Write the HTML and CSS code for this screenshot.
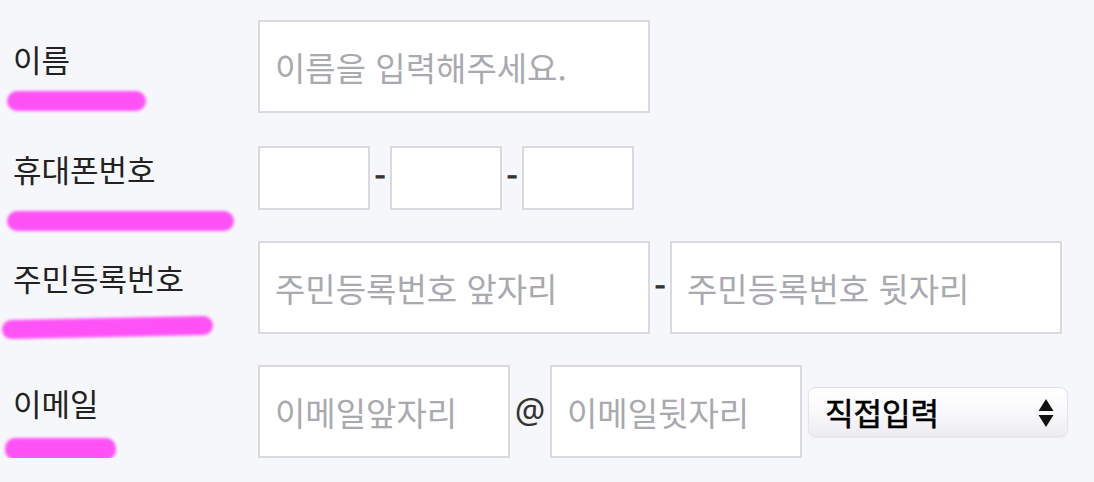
FILE: index.html
```html
<!DOCTYPE html>
<html lang="ko">
<head>
<meta charset="utf-8">
<title>회원정보 입력</title>
<link rel="stylesheet" href="styles.css">
</head>
<body>
<form class="form">
  <div class="row row-name">
    <div class="label-cell">
      <label class="label" for="name">이름</label>
      <span class="mark mark-name"></span>
    </div>
    <div class="fields">
      <input id="name" class="input input-wide" type="text" placeholder="이름을 입력해주세요.">
    </div>
  </div>

  <div class="row row-phone">
    <div class="label-cell">
      <label class="label" for="phone1">휴대폰번호</label>
      <span class="mark mark-phone"></span>
    </div>
    <div class="fields">
      <input id="phone1" class="input input-phone" type="text">
      <span class="sep">-</span>
      <input class="input input-phone" type="text">
      <span class="sep">-</span>
      <input class="input input-phone" type="text">
    </div>
  </div>

  <div class="row row-jumin">
    <div class="label-cell">
      <label class="label" for="jumin1">주민등록번호</label>
      <span class="mark mark-jumin"></span>
    </div>
    <div class="fields">
      <input id="jumin1" class="input input-wide" type="text" placeholder="주민등록번호 앞자리">
      <span class="sep sep-jumin">-</span>
      <input class="input input-wide" type="text" placeholder="주민등록번호 뒷자리">
    </div>
  </div>

  <div class="row row-email">
    <div class="label-cell">
      <label class="label" for="email1">이메일</label>
      <span class="mark mark-email"></span>
    </div>
    <div class="fields">
      <input id="email1" class="input input-email" type="text" placeholder="이메일앞자리">
      <span class="at">@</span>
      <input class="input input-email" type="text" placeholder="이메일뒷자리">
      <div class="select">
        <span class="select-text">직접입력</span>
        <svg class="select-arrows" width="16" height="30" viewBox="0 0 16 30" aria-hidden="true">
          <path d="M8 1 L15.5 13 L0.5 13 Z" fill="#111"/>
          <path d="M0.5 17 L15.5 17 L8 29 Z" fill="#111"/>
        </svg>
      </div>
    </div>
  </div>
</form>
</body>
</html>
```

FILE: styles.css
```css
* { box-sizing: border-box; }

html, body {
  margin: 0;
  padding: 0;
  background: #f6f7fb;
}

body {
  font-family: "Noto Sans CJK KR", "Noto Sans", sans-serif;
  color: #222;
}

.form {
  display: flex;
  flex-direction: column;
  gap: 31px;
  padding-top: 20px;
}

.row {
  display: flex;
  align-items: flex-start;
  height: 93px;
}

.row-name { margin-bottom: 2px; }
.row-phone { height: 64px; }

.label-cell {
  width: 258px;
  flex: none;
  display: flex;
  flex-direction: column;
  align-items: flex-start;
}

.label {
  font-size: 31px;
  line-height: 1;
  padding-left: 13px;
  color: #222;
}

.mark {
  display: block;
  height: 20px;
  border-radius: 10px;
  background: #ff52f6;
  filter: blur(1.8px);
}

.row-name .label-cell { padding-top: 23px; }
.mark-name { width: 139px; margin-left: 7px; margin-top: 17px; }

.row-phone .label-cell { padding-top: 7px; }
.mark-phone { width: 227px; margin-left: 7px; margin-top: 27px; }

.row-jumin .label-cell { padding-top: 21px; }
.mark-jumin { width: 211px; margin-left: 2px; margin-top: 25px; height: 19px; transform: rotate(-1.2deg); }

.row-email .label-cell { padding-top: 22px; }
.mark-email { width: 111px; margin-left: 5px; margin-top: 20px; height: 22px; }

.fields {
  display: flex;
  align-items: center;
}

.input {
  display: block;
  height: 93px;
  border: 2px solid #d9d9df;
  border-radius: 0;
  background: #fff;
  padding: 0 0 0 15px;
  font-family: "Noto Sans CJK KR", "Noto Sans", sans-serif;
  font-size: 33px;
  color: #222;
  outline: none;
  margin: 0;
}

.input::placeholder {
  color: #a9a9b0;
  opacity: 1;
}

.input-wide { width: 392px; }
.input-phone { width: 112px; height: 64px; }
.input-email { width: 252px; }

.sep {
  font-size: 32px;
  font-weight: 400;
  -webkit-text-stroke: 0.8px #333;
  line-height: 1;
  color: #333;
  width: 20px;
  text-align: center;
  padding-bottom: 6px;
}

.sep-jumin { width: 20px; }

.at {
  font-family: "Noto Sans", "Noto Sans CJK KR", sans-serif;
  font-size: 34px;
  line-height: 1;
  color: #333;
  width: 40px;
  text-align: center;
  padding-bottom: 4px;
}

.select {
  position: relative;
  margin-left: 6px;
  width: 260px;
  height: 50px;
  border-radius: 8px;
  border: 1px solid #e3e4ea;
  background: linear-gradient(#ffffff 0%, #fafafc 45%, #ececf1 100%);
  box-shadow: 0 1px 2px rgba(0, 0, 0, 0.06);
  display: flex;
  align-items: center;
  padding-left: 16px;
}

.select-text {
  font-size: 31px;
  font-weight: 400;
  -webkit-text-stroke: 0.6px #000;
  color: #000;
  line-height: 1;
}

.select-arrows {
  position: absolute;
  right: 13px;
  top: 10px;
}
```
